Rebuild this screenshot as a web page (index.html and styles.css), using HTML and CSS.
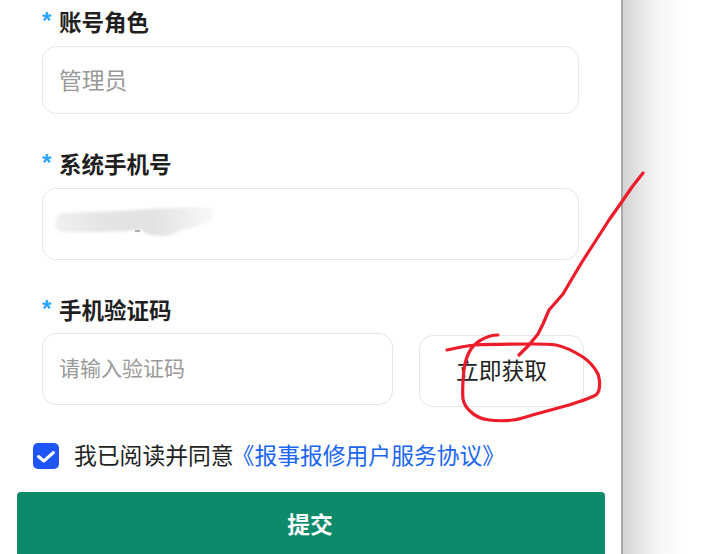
FILE: index.html
```html
<!DOCTYPE html>
<html lang="zh-CN">
<head>
<meta charset="utf-8">
<title>提交</title>
<link rel="stylesheet" href="styles.css">
</head>
<body>
<main class="panel">
  <form class="form">
    <section class="field">
      <div class="label"><span class="star">*</span>账号角色</div>
      <div class="box box-role">管理员</div>
    </section>
    <section class="field">
      <div class="label"><span class="star">*</span>系统手机号</div>
      <div class="box box-phone">
        <svg class="smudge" width="170" height="40" viewBox="0 0 170 40">
          <defs>
            <filter id="soft" x="-10%" y="-30%" width="120%" height="160%"><feGaussianBlur stdDeviation="1.6"/></filter>
            <linearGradient id="smudgeFill" x1="0" x2="1" y1="0" y2="0">
              <stop offset="0" stop-color="#f0f0f0"/>
              <stop offset="0.3" stop-color="#e4e4e4"/>
              <stop offset="0.62" stop-color="#e2e2e2"/>
              <stop offset="1" stop-color="#fafafa"/>
            </linearGradient>
          </defs>
          <path d="M10 7C40 6 70 5 100 3C125 1 150 1 163 2C165 10 160 18 135 23C128 25 125 25 124 27C120 31 100 31 93 27L89 24C60 26 30 27 10 26C1 25 1 9 10 7Z" fill="url(#smudgeFill)" filter="url(#soft)"/>
          <rect x="83" y="24.500" width="5" height="1" fill="#666"/>
        </svg>
      </div>
    </section>
    <section class="field">
      <div class="label"><span class="star">*</span>手机验证码</div>
      <div class="code-row">
        <div class="box box-code">请输入验证码</div>
        <button type="button" class="get-code">立即获取</button>
      </div>
    </section>
    <div class="agree">
      <span class="check">
        <svg width="26" height="26" viewBox="0 0 26 26"><path d="M5.500 13.500L10.800 18L20.500 9.500" fill="none" stroke="#fff" stroke-width="3" stroke-linecap="round" stroke-linejoin="round"/></svg>
      </span>
      <span class="agree-text">我已阅读并同意</span><a class="agree-link">《报事报修用户服务协议》</a>
    </div>
    <button type="button" class="submit">提交</button>
  </form>
</main>
<div class="shade"></div>
<svg class="ink" width="712" height="554" viewBox="0 0 712 554">
  <path d="M643 173L632 187L621 203L609 220L600 234L591 248L582 262L573 277L563 294L549 310L543 324L538 334L529 345L519 355"/>
  <path d="M447 350C456 348 465 346 474 345C494 344 514 344 533 344C541 344 549 344 556 345C566 347 575 352 583 357C590 362 595 368 598 374C600 380 600 385 599 390C598 393 597 395 594 396C586 400 577 402 569 405C558 408 547 411 536 414C528 416 521 419 513 420C505 421 497 421 489 420C482 419 475 416 471 412C466 408 464 404 463 399C462 389 463 380 464 370C465 362 467 355 471 349C474 345 477 342 481 340C486 337 492 335 498 335"/>
</svg>
</body>
</html>
```
FILE: styles.css
```css
* { box-sizing: border-box; }
html, body { margin: 0; height: 100%; }
body {
  width: 712px;
  height: 554px;
  overflow: hidden;
  display: flex;
  position: relative;
  background: #fff;
  font-family: "Noto Sans CJK SC", "Liberation Sans", sans-serif;
  font-size: 22.800px;
  color: #222;
}
.panel {
  width: 623px;
  flex: none;
  height: 554px;
  background: #fff;
  border-right: 2px solid #aaa;
  overflow: hidden;
}
.shade {
  width: 62px;
  flex: none;
  height: 554px;
  background: linear-gradient(to right, #d2d2d2 0%, #e4e4e4 25%, #f5f5f5 55%, #fff 100%);
}
.form { padding-top: 8px; display: flex; flex-direction: column; }
.field { padding-left: 42px; margin-bottom: 36px; }
.label {
  height: 30px;
  line-height: 26px;
  font-size: 22.500px;
  font-weight: 700;
  color: #1f1f1f;
  margin-bottom: 8px;
  display: flex;
}
.star {
  width: 17px;
  color: #2aa5ff;
  font-weight: 700;
  font-family: "Liberation Sans", sans-serif;
  font-size: 24px;
}
.box {
  width: 537px;
  background: #fff;
  border: 1px solid #e6e6e6;
  border-radius: 14px;
  padding: 0 0 2px 16px;
  display: flex;
  align-items: center;
  color: #999;
}
.box-role { height: 68px; }
.box-phone { height: 72px; position: relative; }
.smudge { position: absolute; left: 9px; top: 17px; }
.code-row { display: flex; gap: 26px; align-items: flex-start; margin-top: -1px; }
.box-code { width: 351px; height: 72px; font-size: 21px; padding-bottom: 4px; }
.get-code {
  width: 165px;
  height: 72px;
  margin-top: 2px;
  background: #fff;
  border: 1px solid #e6e6e6;
  border-radius: 14px;
  font: inherit;
  color: #222;
  padding: 0 0 4px 0;
}
.agree {
  display: flex;
  align-items: center;
  height: 26px;
  padding-left: 33px;
  margin-bottom: 23px;
}
.check {
  width: 26px;
  height: 26px;
  background: #1f55f5;
  border-radius: 5px;
  margin-right: 16px;
  display: flex;
}
.agree-text, .agree-link { padding-bottom: 4px; }
.agree-text { margin-left: -1px; }
.agree-link { color: #1a66f0; margin-left: -2px; }
.submit {
  width: 588px;
  height: 66px;
  margin-left: 17px;
  background: #0d8a69;
  border: 0;
  border-radius: 4px;
  color: #fff;
  font: inherit;
  font-weight: 700;
  padding: 0 2px 4px 0;
}
.ink { position: absolute; left: 0; top: 0; pointer-events: none; }
.ink path { fill: none; stroke: #ec1c2b; stroke-width: 3.200; stroke-linecap: round; stroke-linejoin: round; }
```
